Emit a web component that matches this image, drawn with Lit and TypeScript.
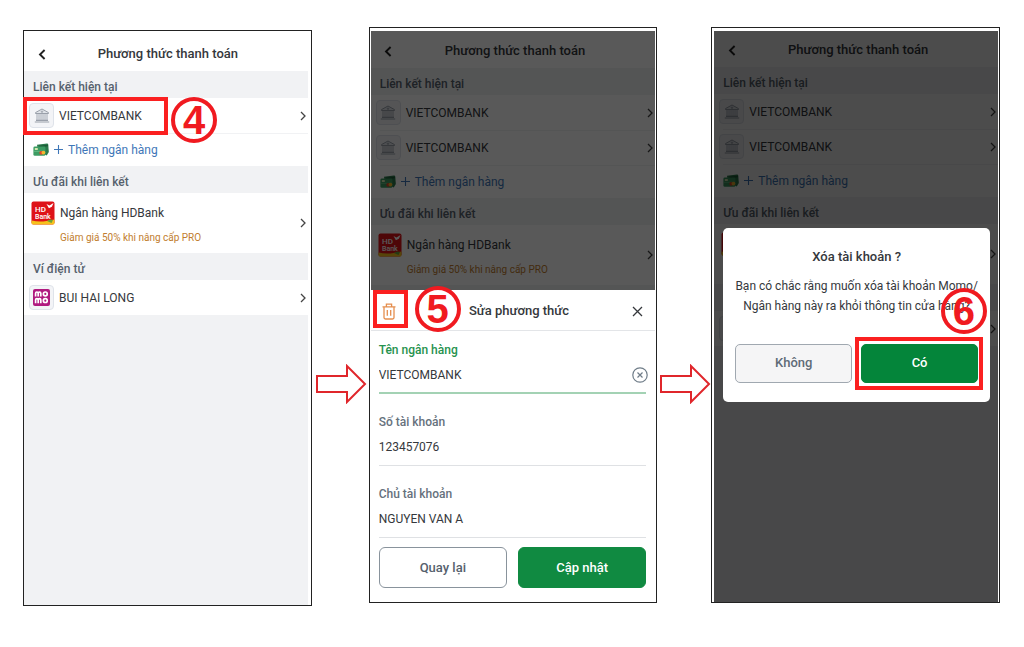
import { LitElement, html, css, nothing } from "lit";
import { customElement, property } from "lit/decorators.js";

const bankIcon = html`<svg width="16" height="15" viewBox="0 0 16 15" fill="none" stroke="currentColor" aria-hidden="true">
  <path d="M1.500 4.600 8 1l6.500 3.600v.9h-13z" fill="#dfe3e8" />
  <circle cx="8" cy="3.700" r=".7" />
  <path d="M3 6v6M5 6v6M7 6v6M9 6v6M11 6v6M13 6v6" stroke-width=".9" />
  <path d="M2 12.400h12M.8 14h14.400" stroke-width="1.100" />
</svg>`;

const momoIcon = html`<svg width="17" height="17" viewBox="0 0 17 17" aria-hidden="true">
  <rect width="17" height="17" rx="2" fill="#b0197f" />
  <g fill="none" stroke="#fff" stroke-width="1.700">
    <path d="M2.600 7.600V4.400q0-1.400 1.300-1.400t1.300 1.400v3.200M5.200 4.400q0-1.400 1.300-1.400t1.300 1.400v3.200" />
    <rect x="10.400" y="3" width="3.800" height="3.800" rx="1.800" />
    <path d="M2.600 14.300v-3.200q0-1.400 1.300-1.400t1.300 1.400v3.200M5.200 11.100q0-1.400 1.300-1.400t1.300 1.400v3.200" />
    <rect x="10.400" y="9.700" width="3.800" height="3.800" rx="1.800" />
  </g>
</svg>`;

const cardsIcon = html`<svg width="16" height="14" viewBox="0 0 16 14" aria-hidden="true">
  <path d="M4 1.800 14 .6q1.200 0 1.300 1.100l.5 7.200-2 3.600L5 8z" fill="#2c7a4c" />
  <path d="m6 2.800 8.800-1.100.1 1.500-8.600 1.100z" fill="#1c5a36" />
  <rect x=".4" y="3.600" width="12" height="9.200" rx="1.400" fill="#3d9c63" />
  <path d="M1 7.800h11v1.200H1z" fill="#5db47d" />
  <rect x="1.800" y="5" width="3" height="2" rx=".5" fill="#d5e8b0" />
  <circle cx="8.200" cy="9.800" r="1.900" fill="#e0452b" />
  <circle cx="10.400" cy="9.600" r="1.900" fill="#f3b72d" />
</svg>`;

const chevron = html`<svg class="chevron" width="6" height="10" viewBox="0 0 6 10" fill="none" stroke="currentColor" stroke-width="1.300" aria-hidden="true">
  <path d="m1 1 4 4-4 4" />
</svg>`;

@customElement("step-badge")
class StepBadge extends LitElement {
  static styles = css`
    :host {
      display: grid;
      place-items: center;
      box-sizing: border-box;
      width: 46px;
      height: 46px;
      border: 4px solid #f01a20;
      border-radius: 50%;
      color: #f01a20;
      font: bold 40px/38px "Liberation Sans", Arial, sans-serif;
    }
  `;
  render() {
    return html`<slot></slot>`;
  }
}

@customElement("step-arrow")
class StepArrow extends LitElement {
  static styles = css`
    :host {
      display: flex;
      justify-content: center;
      padding: 337px 0 0 2px;
    }
  `;
  render() {
    return html`<svg width="52" height="40" viewBox="0 0 52 40" fill="#fff" stroke="#e0262b" stroke-width="2" aria-hidden="true">
      <path d="M2 12h30V2l18 18-18 18V28H2z" />
    </svg>`;
  }
}

@customElement("payment-screen")
class PaymentScreen extends LitElement {
  @property({ type: Number }) accounts = 1;
  @property({ type: Boolean }) marked = false;

  static styles = css`
    :host {
      display: flex;
      flex-direction: column;
      flex: 1;
      background: #f1f2f4;
      color: #35383c;
      font: 12px/20px Roboto, sans-serif;
    }
    button {
      font: inherit;
      color: inherit;
      background: none;
      border: 0;
      padding: 0;
      text-align: left;
    }
    .header {
      display: grid;
      grid-template-columns: 35px 1fr 31px;
      align-items: end;
      box-sizing: border-box;
      height: var(--header-height, 37px);
      padding-bottom: 7px;
      background: #fff;
    }
    .title {
      margin: 0;
      text-align: center;
      font-size: 13px;
      font-weight: 500;
      line-height: 20px;
    }
    .back {
      display: grid;
      place-items: center;
      height: 20px;
      color: #222;
    }
    .section {
      margin: 0;
      padding: 6px 9px 1px;
      font-size: 12px;
      font-weight: 500;
      line-height: 20px;
      color: #56616d;
    }
    .row {
      position: relative;
      display: flex;
      align-items: center;
      gap: 5px;
      background: #fff;
    }
    .row + .row::before {
      content: "";
      position: absolute;
      top: 0;
      left: 9px;
      right: 0;
      height: 1px;
      background: #f1f2f4;
    }
    .open {
      flex: 1;
      display: flex;
      align-items: center;
      gap: 5px;
      height: 35px;
      padding: 0 2px 0 5px;
    }
    .name {
      flex: 1;
    }
    .tile {
      display: grid;
      place-items: center;
      box-sizing: border-box;
      width: 25px;
      height: 25px;
      border: 1px solid #dfe3ea;
      border-radius: 4px;
      background: #f3f4f7;
      color: #9aa0aa;
    }
    .chevron {
      color: #444;
    }
    .add {
      height: 33px;
      padding-left: 9px;
      color: #3f77b8;
    }
    .add a {
      color: inherit;
      text-decoration: none;
    }
    .offer {
      flex: 1;
      display: grid;
      grid-template-columns: 24px 1fr 6px;
      align-items: center;
      column-gap: 5px;
      height: 60px;
      padding: 0 2px 0 7px;
    }
    .copy {
      display: grid;
      gap: 5px;
      padding-top: 5px;
    }
    .promo {
      font-size: 10px;
      color: #c17d2e;
    }
    .logo {
      align-self: start;
      margin-top: 8px;
    }
    .logo text {
      font: 500 8px Roboto, sans-serif;
      fill: #fff;
    }
    .logo .small {
      font-size: 7px;
    }
    .mark {
      position: absolute;
      top: -1px;
      left: -1px;
      box-sizing: border-box;
      width: 145px;
      height: 38px;
      border: 4px solid #fb2020;
      z-index: 1;
    }
    .badge {
      position: absolute;
      left: 147px;
      top: -1px;
      z-index: 1;
    }
  `;

  render() {
    const rows = Array.from({ length: this.accounts });
    return html`
      <header class="header">
        <button class="back" aria-label="Quay lại">
          <svg width="8" height="11" viewBox="0 0 8 11" fill="none" stroke="currentColor" stroke-width="1.900"><path d="M6.600 1 2 5.500 6.600 10" /></svg>
        </button>
        <h1 class="title">Phương thức thanh toán</h1>
      </header>
      <h2 class="section">Liên kết hiện tại</h2>
      ${rows.map(
        () => html`<div class="row">
          <button class="open"><span class="tile">${bankIcon}</span><span class="name">VIETCOMBANK</span>${chevron}</button>
          ${this.marked ? html`<span class="mark"></span><step-badge class="badge">4</step-badge>` : nothing}
        </div>`
      )}
      <div class="row add">
        ${cardsIcon}
        <svg width="9" height="9" viewBox="0 0 9 9" stroke="currentColor" stroke-width="1.100" aria-hidden="true"><path d="M4.500 0v9M0 4.500h9" /></svg>
        <a href="#">Thêm ngân hàng</a>
      </div>
      <h2 class="section">Ưu đãi khi liên kết</h2>
      <div class="row">
        <button class="offer">
          <svg class="logo" width="24" height="24" viewBox="0 0 24 24" aria-hidden="true">
            <rect x=".5" y=".5" width="23" height="23" rx="2" fill="#de1219" />
            <path d="M.5 19.500q8 2 15 .4l8-1.400v3.400q0 1.600-1.600 1.600H2.100q-1.600 0-1.600-1.600z" fill="#f6c21c" />
            <path d="M16 20q3-2.500 6-1l-1.500 3z" fill="#6ba33a" />
            <path d="m15.500 3 3 1.400L22.500 2l-1.600 3.800-3 1.500z" fill="#fff" />
            <text x="4" y="10.500">HD</text>
            <text class="small" x="4" y="17.500">Bank</text>
          </svg>
          <span class="copy"><span>Ngân hàng HDBank</span><span class="promo">Giảm giá 50% khi nâng cấp PRO</span></span>
          ${chevron}
        </button>
      </div>
      <h2 class="section">Ví điện tử</h2>
      <div class="row">
        <button class="open"><span class="tile">${momoIcon}</span><span class="name">BUI HAI LONG</span>${chevron}</button>
      </div>
    `;
  }
}

@customElement("edit-sheet")
class EditSheet extends LitElement {
  static styles = css`
    :host {
      display: block;
      background: #fff;
      color: #35383c;
      font: 12px/20px Roboto, sans-serif;
    }
    button,
    input {
      font: inherit;
      color: inherit;
      background: none;
      border: 0;
      padding: 0;
      min-width: 0;
    }
    .bar {
      position: relative;
      display: grid;
      grid-template-columns: 36px 1fr 36px;
      align-items: center;
      height: 41px;
      padding-top: 2px;
      box-sizing: border-box;
      border-bottom: 1px solid #e3e5e8;
    }
    .title {
      margin: 0;
      text-align: center;
      font-size: 13px;
      font-weight: 500;
      padding-left: 12px;
    }
    .icon {
      display: grid;
      place-items: center;
    }
    .trash {
      color: #e58e4e;
    }
    .mark {
      position: absolute;
      top: 0;
      left: 2px;
      box-sizing: border-box;
      width: 35px;
      height: 38px;
      border: 4px solid #fb2020;
    }
    .badge {
      position: absolute;
      top: -4px;
      left: 44px;
    }
    .form {
      padding: 0 9px 14px 8px;
    }
    .field {
      display: grid;
      gap: 5px;
      margin-bottom: 9px;
      padding: 9px 0 8px;
      border-bottom: 1px solid #dfe1e4;
    }
    .label {
      font-weight: 500;
      color: #66717d;
    }
    .value {
      display: flex;
      align-items: center;
      height: 20px;
      margin-right: -2px;
    }
    .value input {
      flex: 1;
      outline: none;
    }
    .active {
      padding-bottom: 7px;
      border-bottom: 2px solid #a3d2b4;
    }
    .active .label {
      color: #26924e;
    }
    .clear {
      display: grid;
      color: #6f7c88;
    }
    .actions {
      display: grid;
      grid-template-columns: 1fr 1fr;
      gap: 11px;
    }
    .action {
      height: 41px;
      box-sizing: border-box;
      border: 1px solid #89939c;
      border-radius: 6px;
      font-size: 13px;
      font-weight: 500;
      color: #56616d;
    }
    .primary {
      border-color: #108a41;
      background: #108a41;
      color: #fff;
    }
  `;

  render() {
    const others = [
      ["Số tài khoản", "123457076"],
      ["Chủ tài khoản", "NGUYEN VAN A"],
    ];
    return html`
      <div class="bar">
        <button class="icon trash" aria-label="Xóa">
          <svg width="14" height="17" viewBox="0 0 14 17" fill="none" stroke="currentColor" stroke-width="1.300">
            <path d="M.5 3.800h13M4.400 3.500V1.200h5.200v2.300M2 4v10.600q0 1.400 1.400 1.400h7.200q1.400 0 1.400-1.400V4M5.300 7v5.800M8.700 7v5.800" />
          </svg>
        </button>
        <h2 class="title">Sửa phương thức</h2>
        <button class="icon" aria-label="Đóng">
          <svg width="11" height="11" viewBox="0 0 11 11" stroke="currentColor" stroke-width="1.300"><path d="m1 1 9 9M10 1l-9 9" /></svg>
        </button>
        <span class="mark"></span>
        <step-badge class="badge">5</step-badge>
      </div>
      <div class="form">
        <div class="field active">
          <label class="label" for="bank">Tên ngân hàng</label>
          <div class="value">
            <input id="bank" value="VIETCOMBANK" />
            <button class="clear" aria-label="Xóa nội dung">
              <svg width="16" height="16" viewBox="0 0 16 16" fill="none" stroke="currentColor" stroke-width="1.200"><circle cx="8" cy="8" r="7.200" /><path d="m5.500 5.500 5 5M10.500 5.500l-5 5" /></svg>
            </button>
          </div>
        </div>
        ${others.map(
          ([label, value], i) => html`<div class="field">
            <label class="label" for="field-${i}">${label}</label>
            <div class="value"><input id="field-${i}" .value=${value} /></div>
          </div>`
        )}
        <div class="actions">
          <button class="action">Quay lại</button>
          <button class="action primary">Cập nhật</button>
        </div>
      </div>
    `;
  }
}

@customElement("confirm-dialog")
class ConfirmDialog extends LitElement {
  static styles = css`
    :host {
      display: block;
      padding: 19px 12px;
      border-radius: 5px;
      background: #fff;
      color: #35383c;
      font: 12px/20px Roboto, sans-serif;
      text-align: center;
    }
    .title {
      margin: 0 0 9px;
      font-size: 13px;
      font-weight: 500;
    }
    .text {
      margin: 0 -8px 28px;
      white-space: nowrap;
    }
    .actions {
      position: relative;
      display: grid;
      grid-template-columns: 1fr 1fr;
      gap: 9px;
    }
    .action {
      height: 39px;
      border: 1px solid #a0a8b0;
      border-radius: 5px;
      background: #f5f5f6;
      color: #5f6b77;
      font: 500 13px/20px Roboto, sans-serif;
    }
    .primary {
      border-color: #04853a;
      background: #04853a;
      color: #fff;
    }
    .mark {
      position: absolute;
      top: -7px;
      right: -5px;
      bottom: -7px;
      left: 120px;
      border: 4px solid #fb2020;
    }
    .badge {
      position: absolute;
      top: -56px;
      right: -9px;
    }
  `;

  render() {
    return html`
      <h2 class="title">Xóa tài khoản ?</h2>
      <p class="text">Bạn có chắc rằng muốn xóa tài khoản Momo/<br />Ngân hàng này ra khỏi thông tin cửa hàng?</p>
      <div class="actions">
        <button class="action">Không</button>
        <button class="action primary">Có</button>
        <span class="mark"></span>
        <step-badge class="badge">6</step-badge>
      </div>
    `;
  }
}

@customElement("app-root")
class AppRoot extends LitElement {
  static styles = css`
    :host {
      display: block;
      background: #fff;
    }
    .page {
      display: grid;
      grid-template-columns: 1fr 57px 1fr 54px 1fr;
      box-sizing: border-box;
      min-height: 100vh;
      padding: 27px 24px 44px 23px;
    }
    .phone {
      display: flex;
      min-width: 0;
      border: 1px solid #222;
    }
    .list {
      --header-height: 40px;
      margin: 3px 0 -3px;
      padding-right: 3px;
    }
    .edit {
      --header-height: 37px;
      padding: 3px 1px 0;
    }
    .confirm {
      --header-height: 36px;
      padding: 3px 1px 0 2px;
    }
    .screen {
      position: relative;
      display: flex;
      flex: 1;
      min-width: 0;
    }
    .scrim {
      position: absolute;
      inset: 0;
      z-index: 2;
      display: grid;
      background: rgba(0, 0, 0, 0.65);
      align-items: end;
    }
    .confirm .scrim {
      background: rgba(0, 0, 0, 0.7);
      align-items: center;
      padding: 0 8px 4px 9px;
    }
  `;

  render() {
    return html`
      <main class="page">
        <section class="phone list">
          <div class="screen"><payment-screen marked .accounts=${1}></payment-screen></div>
        </section>
        <step-arrow></step-arrow>
        <section class="phone edit">
          <div class="screen">
            <payment-screen .accounts=${2}></payment-screen>
            <div class="scrim"><edit-sheet></edit-sheet></div>
          </div>
        </section>
        <step-arrow></step-arrow>
        <section class="phone confirm">
          <div class="screen">
            <payment-screen .accounts=${2}></payment-screen>
            <div class="scrim"><confirm-dialog role="dialog"></confirm-dialog></div>
          </div>
        </section>
      </main>
    `;
  }
}
